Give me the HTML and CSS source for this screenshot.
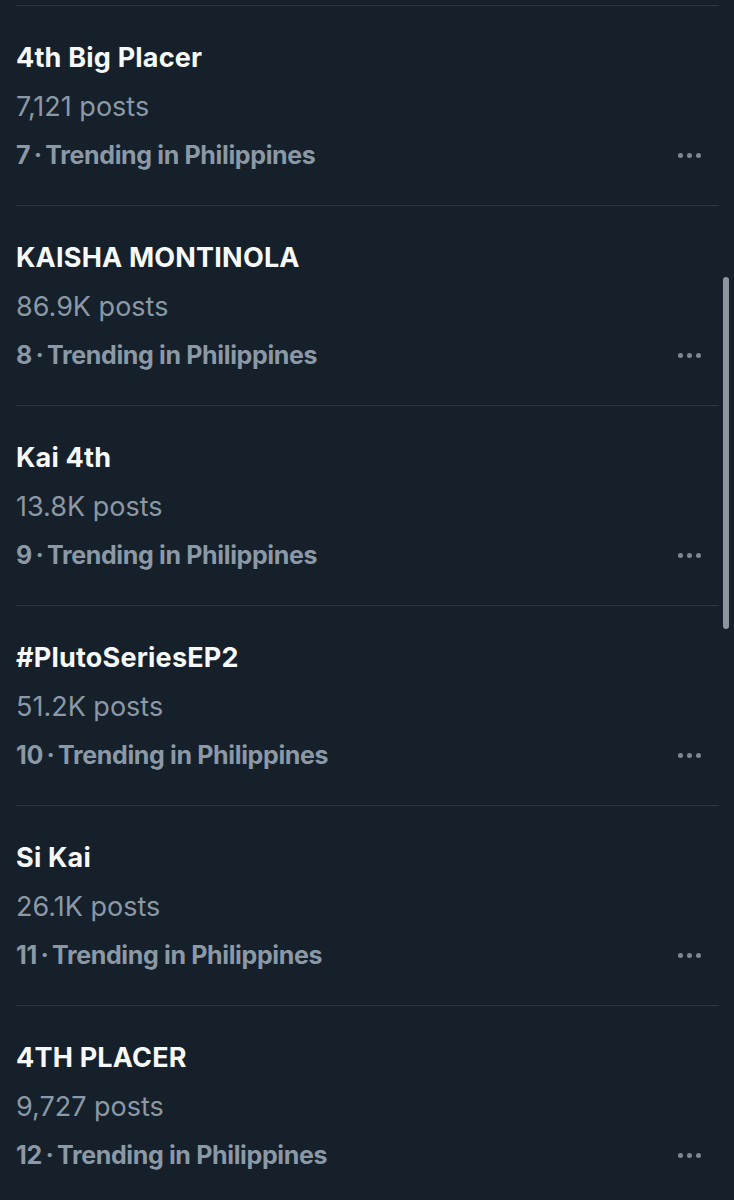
FILE: index.html
```html
<!DOCTYPE html>
<html>
<head>
<meta charset="utf-8">
<link rel="stylesheet" href="styles.css">
</head>
<body>
<div class="page">
  <div class="list">
    <div class="item">
      <div class="title">4th Big Placer</div>
      <div class="posts">7,121 posts</div>
      <div class="meta"><span>7&thinsp;·&thinsp;Trending in Philippines</span><span class="more"><i></i><i></i><i></i></span></div>
    </div>
    <div class="item">
      <div class="title">KAISHA MONTINOLA</div>
      <div class="posts">86.9K posts</div>
      <div class="meta"><span>8&thinsp;·&thinsp;Trending in Philippines</span><span class="more"><i></i><i></i><i></i></span></div>
    </div>
    <div class="item">
      <div class="title">Kai 4th</div>
      <div class="posts">13.8K posts</div>
      <div class="meta"><span>9&thinsp;·&thinsp;Trending in Philippines</span><span class="more"><i></i><i></i><i></i></span></div>
    </div>
    <div class="item">
      <div class="title">#PlutoSeriesEP2</div>
      <div class="posts">51.2K posts</div>
      <div class="meta"><span>10&thinsp;·&thinsp;Trending in Philippines</span><span class="more"><i></i><i></i><i></i></span></div>
    </div>
    <div class="item">
      <div class="title">Si Kai</div>
      <div class="posts">26.1K posts</div>
      <div class="meta"><span>11&thinsp;·&thinsp;Trending in Philippines</span><span class="more"><i></i><i></i><i></i></span></div>
    </div>
    <div class="item">
      <div class="title">4TH PLACER</div>
      <div class="posts">9,727 posts</div>
      <div class="meta"><span>12&thinsp;·&thinsp;Trending in Philippines</span><span class="more"><i></i><i></i><i></i></span></div>
    </div>
  </div>
  <div class="scrollbar"></div>
</div>
</body>
</html>
```
FILE: styles.css
```css
html, body {
  margin: 0;
  padding: 0;
  background: #15202b;
}
.page {
  position: relative;
  width: 734px;
  height: 1200px;
  overflow: hidden;
  font-family: Inter, "Noto Sans", sans-serif;
}
.list {
  padding-top: 5px;
  margin: 0 15px 0 16px;
}
.item {
  border-top: 1px solid #2c3640;
  padding-top: 27px;
  height: 172px;
}
.title {
  color: #f7f9f9;
  font-size: 27px;
  font-weight: 700;
  line-height: 49px;
  letter-spacing: 0.2px;
}
.posts {
  color: #8b98a5;
  font-size: 27px;
  font-weight: 400;
  line-height: 49px;
  letter-spacing: 0;
}
.meta {
  color: #8b98a5;
  font-size: 25px;
  font-weight: 700;
  line-height: 49px;
  letter-spacing: -0.35px;
  display: flex;
  justify-content: space-between;
  align-items: center;
}
.more {
  display: flex;
  gap: 4px;
  margin-right: 18px;
}
.more i {
  display: block;
  width: 5px;
  height: 5px;
  border-radius: 50%;
  background: #7d8893;
}
.scrollbar {
  position: absolute;
  left: 723px;
  top: 277px;
  width: 6px;
  height: 352px;
  border-radius: 3px;
  background: #8c949d;
}
```
